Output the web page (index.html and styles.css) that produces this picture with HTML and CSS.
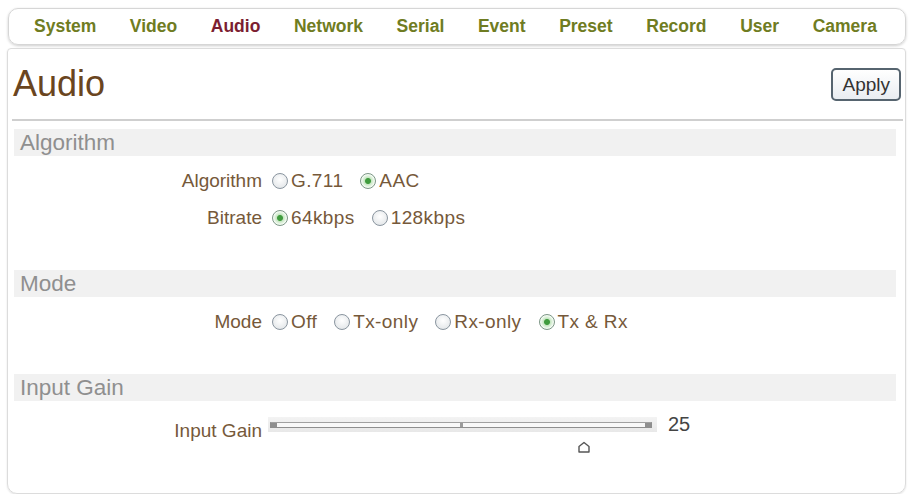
FILE: index.html
```html
<!DOCTYPE html>
<html lang="en">
<head>
  <meta charset="UTF-8">
  <meta name="viewport" content="width=device-width, initial-scale=1.0">
  <title>Audio</title>
  <link rel="stylesheet" href="styles.css">
</head>
<body>
  <div class="menu">
    <a class="menu-item">System</a>
    <a class="menu-item">Video</a>
    <a class="menu-item active">Audio</a>
    <a class="menu-item">Network</a>
    <a class="menu-item">Serial</a>
    <a class="menu-item">Event</a>
    <a class="menu-item">Preset</a>
    <a class="menu-item">Record</a>
    <a class="menu-item">User</a>
    <a class="menu-item">Camera</a>
  </div>

  <div class="panel">
    <div class="panel-head">
      <div class="page-title">Audio</div>
      <button class="apply-button">Apply</button>
    </div>

    <div class="section">
      <div class="section-title">Algorithm</div>
      <div class="row">
        <div class="row-label">Algorithm</div>
        <div class="options">
          <label class="option"><input type="radio" name="algorithm">G.711</label>
          <label class="option"><input type="radio" name="algorithm" checked>AAC</label>
        </div>
      </div>
      <div class="row">
        <div class="row-label">Bitrate</div>
        <div class="options">
          <label class="option"><input type="radio" name="bitrate" checked>64kbps</label>
          <label class="option"><input type="radio" name="bitrate">128kbps</label>
        </div>
      </div>
    </div>

    <div class="section">
      <div class="section-title">Mode</div>
      <div class="row">
        <div class="row-label">Mode</div>
        <div class="options">
          <label class="option"><input type="radio" name="mode">Off</label>
          <label class="option"><input type="radio" name="mode">Tx-only</label>
          <label class="option"><input type="radio" name="mode">Rx-only</label>
          <label class="option"><input type="radio" name="mode" checked>Tx &amp; Rx</label>
        </div>
      </div>
    </div>

    <div class="section">
      <div class="section-title">Input Gain</div>
      <div class="row gain-row">
        <div class="row-label">Input Gain</div>
        <div class="slider">
          <div class="slider-band">
            <div class="slider-track">
              <span class="track-cap"></span>
              <span class="track-tick"></span>
              <span class="track-cap"></span>
            </div>
          </div>
          <div class="slider-thumb" style="left: 309px">
            <svg width="14" height="12" viewBox="0 0 14 12">
              <path d="M2 11 L2 5.5 L7 1.5 L12 5.5 L12 11 Z" fill="#fff" stroke="#555" stroke-width="1.4" stroke-linejoin="round"/>
            </svg>
          </div>
        </div>
        <div class="slider-value">25</div>
      </div>
    </div>
  </div>
</body>
</html>
```

FILE: styles.css
```css
body {
  margin: 0;
  padding: 8px 6px 0 7px;
  font-family: "Liberation Sans", Arial, sans-serif;
  background: #ffffff;
}
.menu {
  display: flex;
  justify-content: space-between;
  align-items: center;
  height: 35px;
  padding: 0 28px 0 25px;
  margin-left: 1px;
  border: 1px solid #d6d6d6;
  border-radius: 10px;
  box-shadow: 0 1px 3px rgba(0, 0, 0, 0.2);
}
.menu-item {
  font-size: 17.5px;
  font-weight: bold;
  color: #6f7c22;
  cursor: pointer;
}
.menu-item.active {
  color: #7c1e31;
}
.panel {
  margin-top: 3px;
  height: 446px;
  border: 1px solid #dcdcdc;
  border-radius: 4px 4px 10px 10px;
  box-shadow: 0 1px 2px rgba(0, 0, 0, 0.12);
  box-sizing: border-box;
}
.panel-head {
  display: flex;
  justify-content: space-between;
  align-items: center;
  height: 70px;
  margin: 0 2px 0 4px;
  padding: 0 2px 0 0;
  border-bottom: 2px solid #cfcfcf;
}
.page-title {
  font-size: 36px;
  color: #6a4520;
  margin-left: 1px;
}
.apply-button {
  font-family: "Liberation Sans", Arial, sans-serif;
  font-size: 19px;
  color: #333;
  height: 33px;
  padding: 0 9px;
  margin-top: 1px;
  border: 2px solid #56646f;
  border-radius: 5px;
  background: linear-gradient(#ffffff, #e9edf1);
}
.section {
  margin: 0 9px 0 6px;
}
.panel-head + .section {
  margin-top: 8px;
}
.section + .section {
  margin-top: 34px;
}
.section-title {
  height: 27px;
  line-height: 27px;
  padding-left: 6px;
  font-size: 22.5px;
  color: #8f8f8f;
  background: #f1f1f1;
}
.row {
  display: flex;
  align-items: center;
  height: 37px;
}
.section-title + .row {
  margin-top: 6px;
}
.row-label {
  width: 248px;
  text-align: right;
  font-size: 19px;
  color: #76593a;
}
.options {
  display: flex;
  align-items: center;
  gap: 17px;
  margin-left: 10px;
}
.option {
  display: flex;
  align-items: center;
  gap: 3px;
  font-size: 19px;
  letter-spacing: 0.4px;
  color: #76593a;
  cursor: pointer;
  white-space: nowrap;
}
.option input {
  appearance: none;
  box-sizing: border-box;
  width: 16px;
  height: 16px;
  margin: 0;
  border: 1.5px solid #8a959f;
  border-radius: 50%;
  background: radial-gradient(circle at 50% 40%, #ffffff, #dde1e4);
}
.option input:checked {
  border-color: #7c9685;
  background: radial-gradient(circle, #3f9b3d 0 2.5px, #c6e6c2 3.5px, #f4fbf3 6.5px);
}
.gain-row {
  align-items: flex-start;
  height: 50px;
  margin-top: 11px !important;
}
.gain-row .row-label {
  line-height: 37px;
}
.slider {
  position: relative;
  width: 389px;
  margin: 5px 0 0 6px;
}
.slider-band {
  height: 15px;
  display: flex;
  align-items: center;
  background: linear-gradient(#f3f3f3, #e8e8e8);
}
.slider-track {
  flex: 1;
  height: 4px;
  margin: 0 5px 0 2px;
  display: flex;
  justify-content: space-between;
  align-items: center;
  border: 1px solid #8e8e8e;
  border-top-color: #a0a0a0;
  background: #f8f8f8;
}
.track-cap {
  width: 6px;
  height: 4px;
  background: #8f8f8f;
}
.track-tick {
  width: 3px;
  height: 4px;
  background: #9a9a9a;
}
.slider-thumb {
  position: absolute;
  top: 24px;
  line-height: 0;
}
.slider-value {
  font-size: 20px;
  color: #444;
  margin: 1px 0 0 11px;
}
```
